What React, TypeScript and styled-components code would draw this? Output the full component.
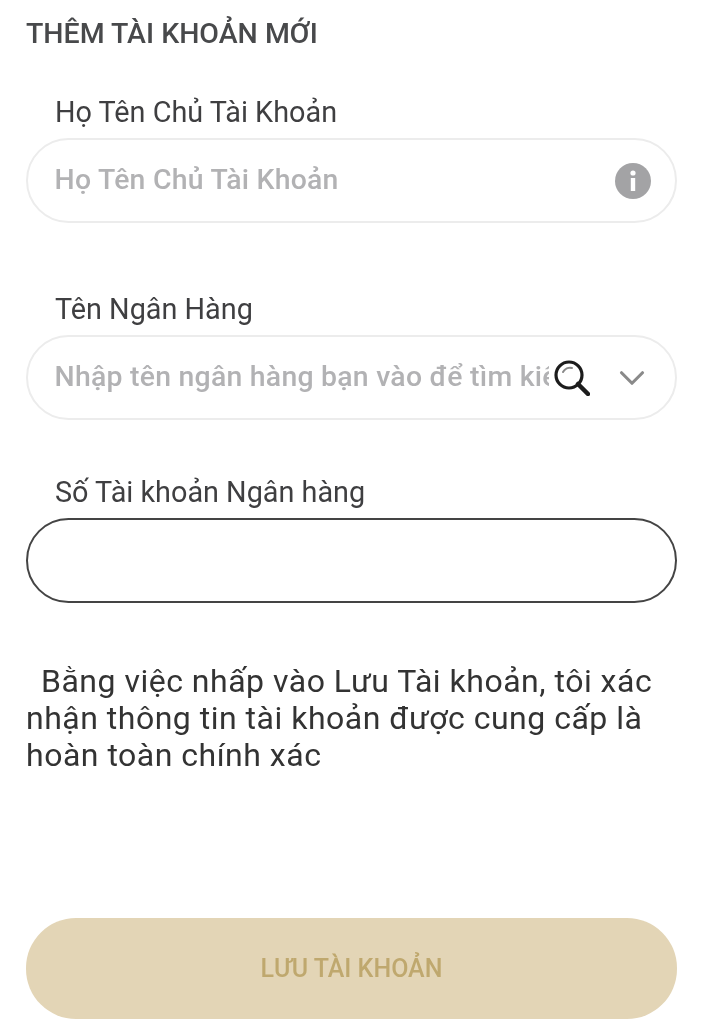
import styled, { createGlobalStyle } from "styled-components";
import { ChevronDown } from "lucide-react";

const GlobalStyle = createGlobalStyle`
  html, body {
    margin: 0;
    padding: 0;
    background: #fff;
  }
  * {
    box-sizing: border-box;
  }
`;

const InfoIcon = () => (
  <svg width="36" height="36" viewBox="0 0 36 36">
    <circle cx="18" cy="18" r="18" fill="#a3a3a5" />
    <rect x="15.8" y="15" width="4.4" height="13" fill="#fff" />
    <circle cx="18" cy="10" r="2.6" fill="#fff" />
  </svg>
);

const SearchIcon = () => (
  <svg width="36" height="36" viewBox="0 0 36 36" fill="none">
    <circle cx="15" cy="15" r="13" stroke="#1c1c1c" strokeWidth="3.2" />
    <path d="M9 12a8 8 0 0 1 9-4" stroke="#8a8a8a" strokeWidth="2" strokeLinecap="round" />
    <path d="M24 24l10 10" stroke="#1c1c1c" strokeWidth="4.5" strokeLinecap="round" />
  </svg>
);

export default function App() {
  return (
    <>
      <GlobalStyle />
      <Page>
        <Title>THÊM TÀI KHOẢN MỚI</Title>
        <Field $gap={68}>
          <Label>Họ Tên Chủ Tài Khoản</Label>
          <InputBox>
            <Placeholder>Họ Tên Chủ Tài Khoản</Placeholder>
            <InfoIcon />
          </InputBox>
        </Field>
        <Field $gap={54}>
          <Label>Tên Ngân Hàng</Label>
          <InputBox>
            <Placeholder>Nhập tên ngân hàng bạn vào để tìm kiếm</Placeholder>
            <SearchIcon />
            <Chevron>
              <ChevronDown size={42} strokeWidth={1.8} />
            </Chevron>
          </InputBox>
        </Field>
        <Field $gap={60}>
          <Label>Số Tài khoản Ngân hàng</Label>
          <InputBox $active />
        </Field>
        <Notice>Bằng việc nhấp vào Lưu Tài khoản, tôi xác nhận thông tin tài khoản được cung cấp là hoàn toàn chính xác</Notice>
        <SaveButton>LƯU TÀI KHOẢN</SaveButton>
      </Page>
    </>
  );
}

const Page = styled.div`
  width: 703px;
  height: 1024px;
  padding: 17px 26px 0 26px;
  display: flex;
  flex-direction: column;
  background: #fff;
  font-family: Roboto, "Liberation Sans", sans-serif;
  overflow: hidden;
  filter: blur(0.5px);
`;

const Title = styled.h1`
  margin: 0 0 43px;
  font-size: 28.5px;
  line-height: 34px;
  font-weight: 500;
  color: #48494b;
`;

const Field = styled.div<{ $gap: number }>`
  display: flex;
  flex-direction: column;
  margin-bottom: ${(props) => props.$gap}px;
`;

const Label = styled.label`
  padding-left: 29px;
  margin-bottom: 8px;
  font-size: 28.8px;
  line-height: 36px;
  color: #3f3f41;
`;

const InputBox = styled.div<{ $active?: boolean }>`
  width: 651px;
  height: 85px;
  padding: 0 24.5px 0 26.5px;
  display: flex;
  align-items: center;
  border: ${(props) => (props.$active ? "2px solid #444" : "2px solid #ececec")};
  border-radius: 43px;
  background: #fff;
`;

const Placeholder = styled.span`
  flex: 1;
  min-width: 0;
  margin-right: 5px;
  padding-bottom: 2px;
  overflow: hidden;
  white-space: nowrap;
  font-size: 28.4px;
  font-weight: 500;
  letter-spacing: 0.25px;
  color: #b2b2b4;
`;

const Chevron = styled.span`
  display: flex;
  margin-left: 21px;
  margin-right: -2px;
  color: #8a8a8a;
`;

const Notice = styled.p`
  margin: 0;
  font-size: 32px;
  line-height: 37px;
  letter-spacing: 0.5px;
  text-indent: 15px;
  color: #333;
`;

const SaveButton = styled.button`
  width: 651px;
  height: 101px;
  margin-top: auto;
  margin-bottom: 5px;
  border: 0;
  border-radius: 50px;
  background: #e3d5b6;
  color: #bfa86e;
  font-family: inherit;
  font-size: 25px;
  font-weight: 500;
`;
